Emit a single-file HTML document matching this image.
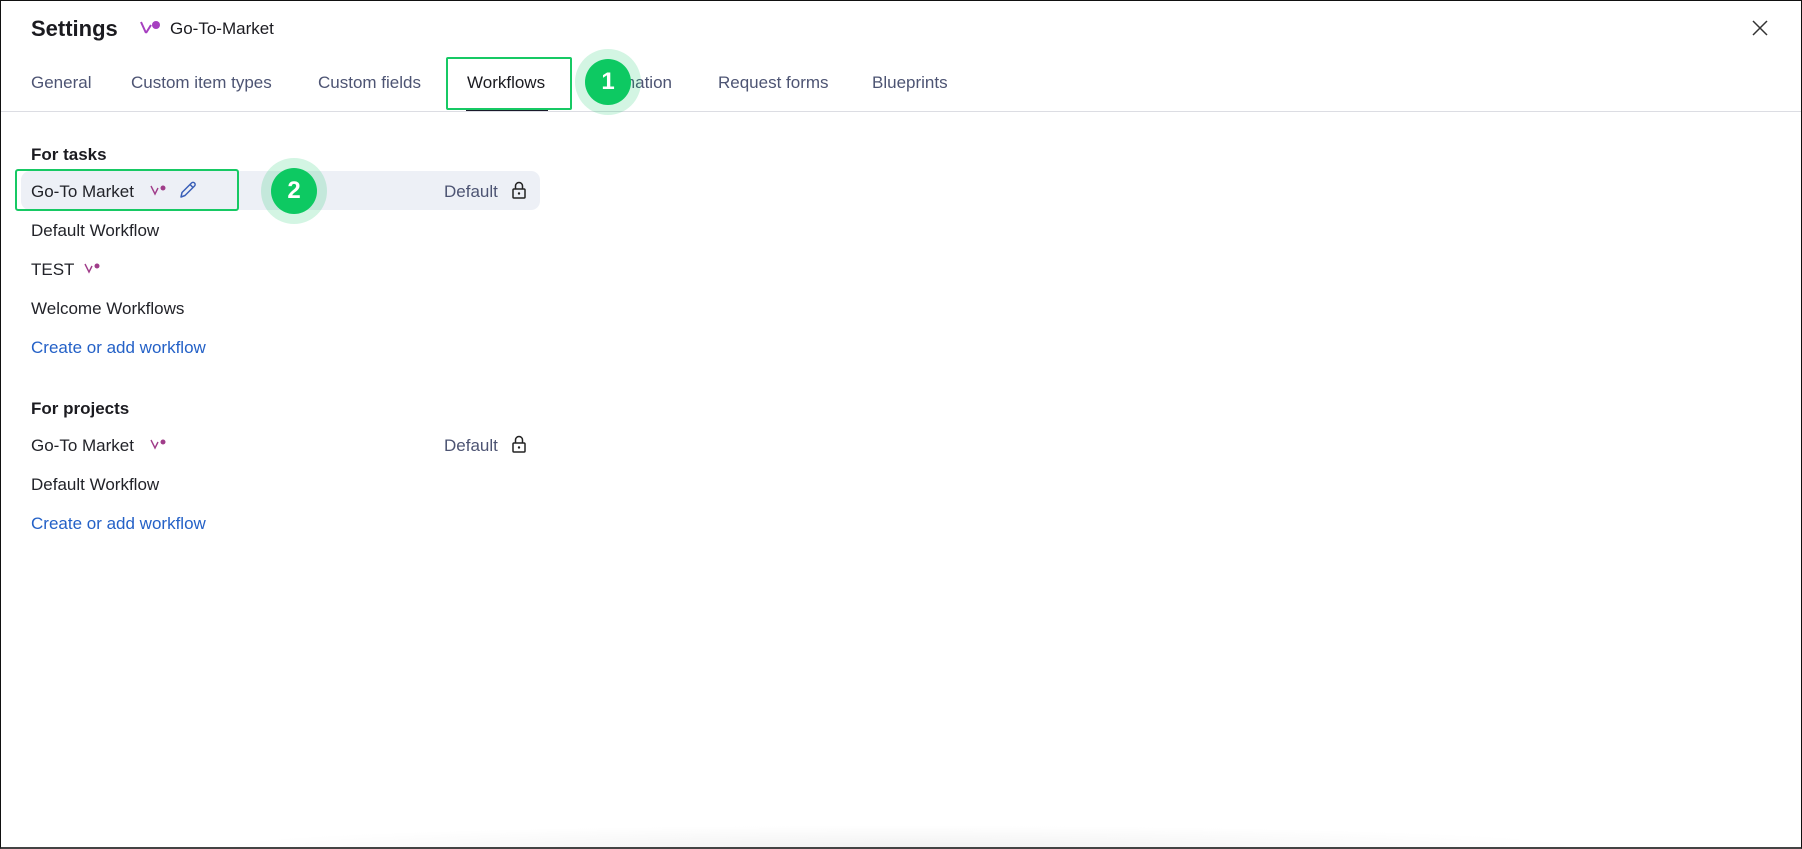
<!DOCTYPE html>
<html><head><meta charset="utf-8"><style>
*{margin:0;padding:0;box-sizing:border-box}
html,body{width:1802px;height:849px;overflow:hidden;background:#fff;font-family:"Liberation Sans",sans-serif}
.frame{position:absolute;left:0;top:0;width:1802px;height:849px;border:1px solid #111;border-bottom:2px solid #444}
.abs{position:absolute;white-space:nowrap}
.title{left:31px;top:16px;font-size:22px;font-weight:bold;color:#1b1b20}
.proj{left:170px;top:19px;font-size:17px;color:#1b1b20}
.tab{top:73px;font-size:17px;color:#4d5473}
.sep{left:1px;right:1px;top:111px;height:1px;background:#dcdde3;position:absolute}
.item{font-size:17px;color:#222329;left:31px}
.link{font-size:17px;color:#2461c7;left:31px}
.head{font-size:17px;color:#1b1b20;font-weight:bold;left:31px}
.def{font-size:17px;color:#4d5473;left:444px}
.circ{position:absolute;border-radius:50%;background:#0dc962;color:#fff;font-weight:bold;font-size:24px;text-align:center;box-shadow:0 0 0 10px rgba(13,201,98,.18)}
</style></head><body>
<div class="frame"></div>
<div class="abs title">Settings</div>
<svg class="abs" style="left:139px;top:19px" width="26" height="18" viewBox="0 0 26 18"><path d="M2 3 L7 14 M7 14 L12 6" stroke="#a63fc0" stroke-width="2" fill="none"/><circle cx="17" cy="6" r="4" fill="#a63fc0"/></svg>
<div class="abs proj">Go-To-Market</div>
<svg class="abs" style="left:1752px;top:20px" width="16" height="16"><path d="M1 1L15 15M15 1L1 15" stroke="#333" stroke-width="1.5"/></svg>

<div class="abs tab" style="left:31px">General</div>
<div class="abs tab" style="left:131px">Custom item types</div>
<div class="abs tab" style="left:318px">Custom fields</div>
<div class="abs tab" style="left:467px;color:#1b1b20">Workflows</div>
<div class="abs tab" style="left:586px">Automation</div>
<div class="abs tab" style="left:718px">Request forms</div>
<div class="abs tab" style="left:872px">Blueprints</div>
<div class="sep"></div>
<div class="abs" style="left:466px;top:108px;width:82px;height:3px;background:#1a1a2a"></div>
<div class="abs" style="left:446px;top:57px;width:126px;height:53px;border:2px solid #17c964;border-radius:2px"></div>
<div class="circ" style="left:585px;top:59px;width:46px;height:46px;line-height:46px">1</div>

<div class="abs head" style="top:145px">For tasks</div>
<div class="abs" style="left:21px;top:171px;width:519px;height:39px;background:#edf0f6;border-radius:9px"></div>
<div class="abs" style="left:15px;top:169px;width:224px;height:42px;border:2px solid #17c964;border-radius:3px"></div>
<div class="abs item" style="top:182px">Go-To Market</div>
<svg class="abs" style="left:150px;top:184px" width="18" height="12" viewBox="0 0 18 12"><path d="M1 2L5 10L8 4" stroke="#a03d8a" stroke-width="1.4" fill="none"/><circle cx="13" cy="4" r="2.5" fill="#a03d8a"/></svg>
<svg class="abs" style="left:178px;top:180px" width="20" height="20" viewBox="0 0 20 20"><path d="M3 17L4 12.5L13.5 3A1.8 1.8 0 0 1 16.5 6L7 15.5Z M12 4.5L15 7.5" stroke="#3a5fb8" stroke-width="1.5" fill="none" stroke-linejoin="round"/></svg>
<div class="circ" style="left:271px;top:168px;width:46px;height:46px;line-height:46px">2</div>
<div class="abs def" style="top:182px">Default</div>
<svg class="abs" style="left:511px;top:181px" width="16" height="18" viewBox="0 0 16 18"><rect x="2" y="8" width="12" height="9" rx="1" stroke="#222" stroke-width="1.5" fill="none"/><path d="M4.5 8V5a3.5 3.5 0 0 1 7 0v3" stroke="#222" stroke-width="1.5" fill="none"/><circle cx="8" cy="12.5" r="1.2" fill="#222"/></svg>

<div class="abs item" style="top:221px">Default Workflow</div>
<div class="abs item" style="top:260px">TEST</div>
<svg class="abs" style="left:84px;top:262px" width="18" height="12" viewBox="0 0 18 12"><path d="M1 2L5 10L8 4" stroke="#a03d8a" stroke-width="1.4" fill="none"/><circle cx="13" cy="4" r="2.5" fill="#a03d8a"/></svg>
<div class="abs item" style="top:299px">Welcome Workflows</div>
<div class="abs link" style="top:338px">Create or add workflow</div>

<div class="abs head" style="top:399px">For projects</div>
<div class="abs item" style="top:436px">Go-To Market</div>
<svg class="abs" style="left:150px;top:438px" width="18" height="12" viewBox="0 0 18 12"><path d="M1 2L5 10L8 4" stroke="#a03d8a" stroke-width="1.4" fill="none"/><circle cx="13" cy="4" r="2.5" fill="#a03d8a"/></svg>
<div class="abs def" style="top:436px">Default</div>
<svg class="abs" style="left:511px;top:435px" width="16" height="18" viewBox="0 0 16 18"><rect x="2" y="8" width="12" height="9" rx="1" stroke="#222" stroke-width="1.5" fill="none"/><path d="M4.5 8V5a3.5 3.5 0 0 1 7 0v3" stroke="#222" stroke-width="1.5" fill="none"/><circle cx="8" cy="12.5" r="1.2" fill="#222"/></svg>
<div class="abs item" style="top:475px">Default Workflow</div>
<div class="abs link" style="top:514px">Create or add workflow</div>

<div class="abs" style="left:200px;top:825px;width:1400px;height:22px;background:radial-gradient(ellipse at 50% 100%,rgba(0,0,0,.05),rgba(0,0,0,0) 70%)"></div>
</body></html>
